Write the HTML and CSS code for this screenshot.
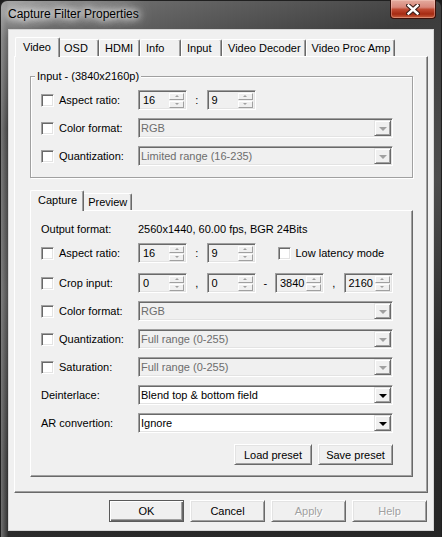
FILE: index.html
```html
<!DOCTYPE html>
<html lang="en">
  <head>
    <meta charset="UTF-8" />
    <meta name="viewport" content="width=device-width, initial-scale=1.0" />
    <title>Capture Filter Properties</title>
    <link rel="stylesheet" href="styles.css">
  </head>
  <body>
    <div class="window">
      <div class="titlebar">
        <span class="title">Capture Filter Properties</span>
        <button class="close-btn" aria-label="Close">
          <svg width="14" height="11" viewBox="0 0 14 11">
            <path d="M2.5 1.5 L11.5 9.5 M11.5 1.5 L2.5 9.5" stroke="#3b1d18" stroke-width="4.6" stroke-linecap="square" />
            <path d="M2.5 1.5 L11.5 9.5 M11.5 1.5 L2.5 9.5" stroke="#ffffff" stroke-width="2.4" stroke-linecap="square" />
          </svg>
        </button>
      </div>

      <div class="client">
        <div class="tabs">
          <div class="tab active">Video</div>
          <div class="tab">OSD</div>
          <div class="tab">HDMI</div>
          <div class="tab">Info</div>
          <div class="tab">Input</div>
          <div class="tab">Video Decoder</div>
          <div class="tab">Video Proc Amp</div>
        </div>

        <div class="panel">
          <fieldset class="group">
            <legend>Input - (3840x2160p)</legend>
            <div class="row">
              <label class="label"><span class="check"></span>Aspect ratio:</label>
              <div class="spin"><span>16</span><span class="updown"><i></i><i></i></span></div>
              <span class="sep">:</span>
              <div class="spin"><span>9</span><span class="updown"><i></i><i></i></span></div>
            </div>
            <div class="row">
              <label class="label"><span class="check"></span>Color format:</label>
              <div class="combo"><span class="combo-value">RGB</span><span class="drop"></span></div>
            </div>
            <div class="row">
              <label class="label"><span class="check"></span>Quantization:</label>
              <div class="combo"><span class="combo-value">Limited range (16-235)</span><span class="drop"></span></div>
            </div>
          </fieldset>

          <div class="tabs sub">
            <div class="tab active">Capture</div>
            <div class="tab">Preview</div>
          </div>

          <div class="panel inner">
            <div class="row short">
              <span class="label">Output format:</span>
              <span>2560x1440, 60.00 fps, BGR 24Bits</span>
            </div>
            <div class="row short">
              <label class="label"><span class="check"></span>Aspect ratio:</label>
              <div class="spin"><span>16</span><span class="updown"><i></i><i></i></span></div>
              <span class="sep">:</span>
              <div class="spin"><span>9</span><span class="updown"><i></i><i></i></span></div>
              <label class="latency"><span class="check"></span>Low latency mode</label>
            </div>
            <div class="row spaced">
              <label class="label"><span class="check"></span>Crop input:</label>
              <div class="spin"><span>0</span><span class="updown"><i></i><i></i></span></div>
              <span class="sep">,</span>
              <div class="spin"><span>0</span><span class="updown"><i></i><i></i></span></div>
              <span class="sep">-</span>
              <div class="spin"><span>3840</span><span class="updown"><i></i><i></i></span></div>
              <span class="sep">,</span>
              <div class="spin"><span>2160</span><span class="updown"><i></i><i></i></span></div>
            </div>
            <div class="row">
              <label class="label"><span class="check"></span>Color format:</label>
              <div class="combo"><span class="combo-value">RGB</span><span class="drop"></span></div>
            </div>
            <div class="row">
              <label class="label"><span class="check"></span>Quantization:</label>
              <div class="combo"><span class="combo-value">Full range (0-255)</span><span class="drop"></span></div>
            </div>
            <div class="row">
              <label class="label"><span class="check"></span>Saturation:</label>
              <div class="combo"><span class="combo-value">Full range (0-255)</span><span class="drop"></span></div>
            </div>
            <div class="row">
              <span class="label">Deinterlace:</span>
              <div class="combo enabled"><span class="combo-value">Blend top &amp; bottom field</span><span class="drop"></span></div>
            </div>
            <div class="row">
              <span class="label">AR convertion:</span>
              <div class="combo enabled"><span class="combo-value">Ignore</span><span class="drop"></span></div>
            </div>
            <div class="preset-row">
              <button class="btn load">Load preset</button>
              <button class="btn save">Save preset</button>
            </div>
          </div>
        </div>

        <div class="actions">
          <button class="btn default">OK</button>
          <button class="btn">Cancel</button>
          <button class="btn" disabled>Apply</button>
          <button class="btn" disabled>Help</button>
        </div>
      </div>
    </div>
  </body>
</html>
```

FILE: styles.css
```css
* {
  margin: 0;
  padding: 0;
  box-sizing: border-box;
}

body {
  width: 442px;
  height: 537px;
  overflow: hidden;
  background: #1b1b1b;
  font-family: "Liberation Sans", Arial, sans-serif;
  font-size: 11px;
  color: #000000;
}

button {
  font: inherit;
  color: inherit;
}

/* window frame */

.window {
  height: 537px;
  display: flex;
  flex-direction: column;
  padding: 0 7px 6px;
  border-radius: 7px 7px 0 0;
  border: 1px solid #202020;
  border-bottom: none;
  background: linear-gradient(
      to right,
      rgba(170, 170, 170, 0.55) 0,
      rgba(120, 120, 120, 0.2) 6px,
      rgba(0, 0, 0, 0) 7px
    ),
    linear-gradient(
      165deg,
      #a4a4a4 0%,
      #6a6a6a 6%,
      #3d3d3d 20%,
      #4c4c4c 45%,
      #2e2e2e 70%,
      #262626 100%
    );
}

.titlebar {
  height: 28px;
  display: flex;
  justify-content: space-between;
  align-items: flex-start;
}

.title {
  margin: 5px 0 0 0;
  font-size: 12px;
  line-height: 16px;
  color: #000000;
  text-shadow: 0 0 6px #ffffff, 0 0 10px #ffffff, 0 0 14px #ffffff,
    0 0 18px rgba(255, 255, 255, 0.8);
}

.close-btn {
  width: 46px;
  height: 19px;
  margin: -1px -2px 0 0;
  display: flex;
  align-items: center;
  justify-content: center;
  border: 1px solid #3c0f08;
  border-top: none;
  border-radius: 0 0 4px 4px;
  background: linear-gradient(
    #e4ab9e 0%,
    #d8877a 40%,
    #c04a32 52%,
    #a52a12 78%,
    #c9603f 100%
  );
  box-shadow: inset 0 0 0 1px rgba(255, 220, 210, 0.35);
}

.client {
  flex: 1;
  display: flex;
  flex-direction: column;
  padding: 7px 5px 8px;
  background: #f0f0f0;
  border: 1px solid #d6d6d6;
}

/* tabs */

.tabs {
  display: flex;
  align-items: flex-end;
  height: 19px;
  padding-left: 3px;
}

.tabs.sub {
  height: 20px;
  margin-top: 12px;
  padding-left: 2px;
}

.tab {
  min-width: 41px;
  height: 17px;
  padding: 0 4px 0 5px;
  display: flex;
  align-items: center;
  white-space: nowrap;
  background: #f0f0f0;
  border-top: 1px solid #ffffff;
  border-left: 1px solid #ffffff;
  border-right: 1px solid #696969;
  border-radius: 2px 2px 0 0;
  box-shadow: inset -1px 0 0 #a0a0a0;
}

.tab.active {
  position: relative;
  z-index: 1;
  min-width: 45px;
  height: 20px;
  margin: 0 -2px -1px;
  padding: 0 6px 2px 7px;
}

.tabs.sub .tab.active {
  height: 21px;
}

.panel {
  height: 437px;
  padding: 13px 14px 0 15px;
  border: 1px solid;
  border-color: #ffffff #696969 #696969 #ffffff;
  box-shadow: inset -1px -1px 0 #a0a0a0;
}

.panel.inner {
  height: 267px;
  padding: 6px 0 0 10px;
}

/* group box */

.group {
  min-width: 0;
  padding: 3px 0 7px 10px;
  border: 1px solid #a0a0a0;
  box-shadow: 1px 1px 0 #ffffff, inset 1px 1px 0 #ffffff;
}

.group legend {
  margin-left: -6px;
  padding: 0 2px;
  line-height: 13px;
  background: #f0f0f0;
}

/* rows */

.row {
  height: 28px;
  display: flex;
  align-items: center;
}

.row.short {
  height: 24px;
}

.row.spaced {
  margin-top: 4px;
}

.label {
  width: 97px;
  display: flex;
  align-items: center;
  white-space: nowrap;
}

.check {
  width: 13px;
  height: 13px;
  margin-right: 5px;
  background: #ffffff;
  border: 1px solid;
  border-color: #a0a0a0 #ffffff #ffffff #a0a0a0;
  box-shadow: inset 1px 1px 0 #696969, inset -1px -1px 0 #e3e3e3;
}

.latency {
  margin-left: 22px;
  display: flex;
  align-items: center;
}

.sep {
  width: 19.5px;
  text-align: center;
}

/* spin edits */

.spin {
  width: 49px;
  height: 20px;
  display: flex;
  align-items: center;
  justify-content: space-between;
  padding: 0 2px 0 4px;
  background: #f0f0f0;
  border: 1px solid;
  border-color: #a0a0a0 #ffffff #ffffff #a0a0a0;
  box-shadow: inset 1px 1px 0 #696969, inset -1px -1px 0 #e3e3e3;
}

.updown {
  display: flex;
  flex-direction: column;
  gap: 1px;
}

.updown i {
  width: 15px;
  height: 7px;
  display: flex;
  align-items: center;
  justify-content: center;
  border: 1px solid;
  border-color: #ffffff #a0a0a0 #a0a0a0 #ffffff;
  background: #f0f0f0;
}

.updown i::after {
  content: "";
  border-left: 2px solid transparent;
  border-right: 2px solid transparent;
  border-bottom: 2px solid #a0a0a0;
}

.updown i + i::after {
  border-bottom: none;
  border-top: 2px solid #a0a0a0;
}

/* combo boxes */

.combo {
  width: 255px;
  height: 20px;
  display: flex;
  align-items: center;
  padding: 0 1px 0 2px;
  color: #6d6d6d;
  background: #f0f0f0;
  border: 1px solid;
  border-color: #a0a0a0 #ffffff #ffffff #a0a0a0;
  box-shadow: inset 1px 1px 0 #696969, inset -1px -1px 0 #e3e3e3;
}

.combo.enabled {
  color: #000000;
  background: #ffffff;
}

.combo-value {
  flex: 1;
  white-space: nowrap;
}

.drop {
  width: 17px;
  height: 16px;
  display: flex;
  align-items: center;
  justify-content: center;
  background: #f0f0f0;
  border: 1px solid;
  border-color: #e3e3e3 #696969 #696969 #e3e3e3;
  box-shadow: inset 1px 1px 0 #ffffff, inset -1px -1px 0 #a0a0a0;
}

.drop::after {
  content: "";
  margin-top: 1px;
  border-left: 4px solid transparent;
  border-right: 4px solid transparent;
  border-top: 4px solid #a0a0a0;
}

.combo.enabled .drop::after {
  border-top-color: #000000;
}

/* buttons */

.btn {
  width: 75px;
  height: 22px;
  background: #f0f0f0;
  border: 1px solid;
  border-color: #ffffff #696969 #696969 #ffffff;
  box-shadow: inset 1px 1px 0 #e3e3e3, inset -1px -1px 0 #a0a0a0;
}

.btn.default {
  border: 1px solid #5a5a5a;
  box-shadow: inset 1px 1px 0 #ffffff, inset -1px -1px 0 #696969,
    inset -2px -2px 0 #a0a0a0;
}

.btn:disabled {
  color: #a0a0a0;
  text-shadow: 1px 1px 0 #ffffff;
}

.preset-row {
  margin-top: 7px;
  padding-right: 19px;
  display: flex;
  justify-content: flex-end;
  gap: 6px;
}

.btn.load {
  width: 78px;
  height: 21px;
}

.btn.save {
  height: 21px;
}

.actions {
  margin-top: 7px;
  padding-right: 1px;
  display: flex;
  justify-content: flex-end;
  gap: 6px;
}
```
